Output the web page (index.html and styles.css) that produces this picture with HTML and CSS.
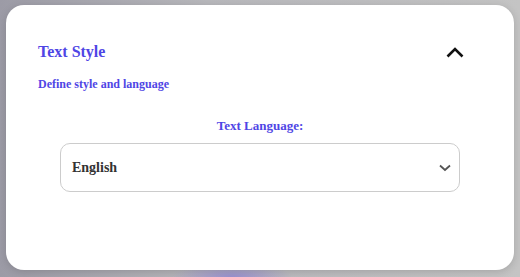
FILE: index.html
```html
<!DOCTYPE html>
<html>
<head>
    <meta charset="utf-8" />
    <title>Text Style</title>
    <link rel="stylesheet" href="styles.css">
</head>
<body>
    <div class="card">
        <div class="card-head">
            <div class="card-title">Text Style</div>
            <div class="toggle">
                <svg width="18" height="11" viewBox="0 0 18 11">
                    <path d="M1.5 9.5 L9 2 L16.5 9.5" fill="none" stroke="#111" stroke-width="2.6" />
                </svg>
            </div>
        </div>
        <div class="card-sub">Define style and language</div>

        <div class="field">
            <div class="field-label">Text Language:</div>
            <div class="select">
                <span class="select-value">English</span>
                <svg width="12" height="8" viewBox="0 0 12 8">
                    <path d="M1 1.5 L6 6 L11 1.5" fill="none" stroke="#555" stroke-width="1.8" />
                </svg>
            </div>
        </div>
    </div>
</body>
</html>
```

FILE: styles.css
```css
html, body {
    margin: 0;
    height: 100%;
}

body {
    background:
        radial-gradient(ellipse 60px 14px at 232px 277px, rgba(150, 140, 210, 0.9), rgba(150, 140, 210, 0)),
        linear-gradient(90deg, #9c9ba6 0%, #b8b8bc 40%, #c4c4c4 100%);
    font-family: "Liberation Serif", "Times New Roman", serif;
    padding: 5px 6px 0;
    box-sizing: border-box;
}

.card {
    height: 265px;
    box-sizing: border-box;
    background: #fff;
    border-radius: 18px;
    box-shadow: 0 2px 8px rgba(0, 0, 0, 0.15);
    padding: 31px 43px 0 32px;
}

.card-head {
    display: flex;
    justify-content: space-between;
    align-items: center;
    height: 32px;
}

.card-title {
    color: #4f46e5;
    font-size: 16px;
    font-weight: bold;
    line-height: 20px;
}

.toggle {
    width: 32px;
    height: 32px;
    display: flex;
    align-items: center;
    justify-content: center;
    cursor: pointer;
}

.card-sub {
    color: #4f46e5;
    font-size: 12px;
    font-weight: bold;
    line-height: 16px;
    margin-top: 8px;
}

.field {
    display: flex;
    flex-direction: column;
    align-items: center;
    margin-top: 26px;
    margin-right: -11px;
}

.field-label {
    color: #4f46e5;
    font-size: 13px;
    font-weight: bold;
    line-height: 16px;
}

.select {
    margin-top: 9px;
    width: 400px;
    height: 49px;
    box-sizing: border-box;
    border: 1px solid #cccccc;
    border-radius: 10px;
    display: flex;
    align-items: center;
    justify-content: space-between;
    padding: 0 8px 0 11px;
}

.select-value {
    color: #333;
    font-size: 14px;
    font-weight: bold;
}
```
